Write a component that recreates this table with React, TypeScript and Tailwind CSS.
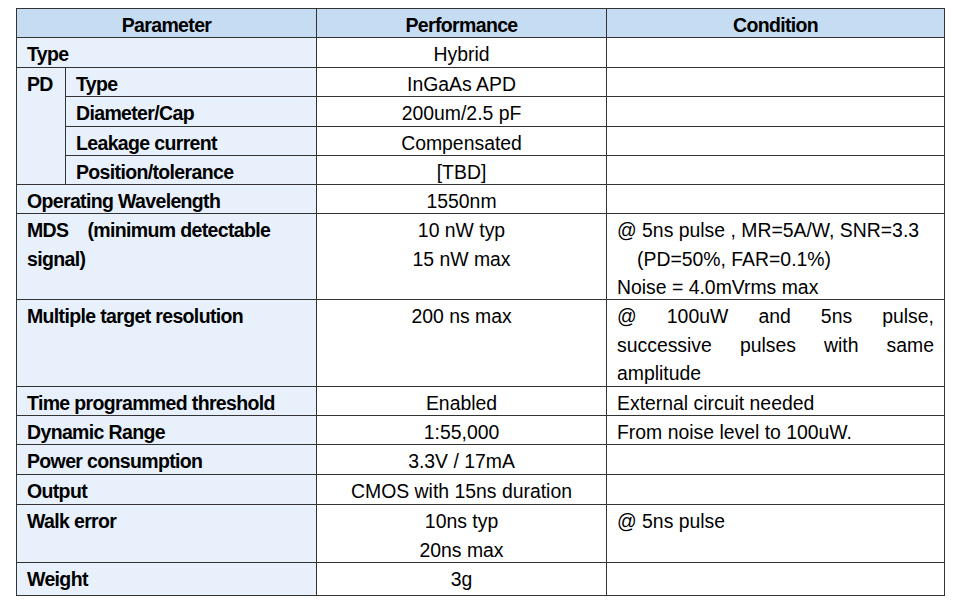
import React from "react";

const B = "border border-[#333333] pt-[2px] pb-0 align-top";
const P = `${B} bg-[#e8f1fb] px-[10px] font-bold text-[19.5px] tracking-[-0.65px]`;
const H = `${B} bg-[#c6dcf2] px-[10px] text-center font-bold text-[19.5px] tracking-[-0.65px]`;
const V = `${B} bg-white px-[10px] text-center text-[19.4px]`;
const C = `${B} bg-white px-[10px] text-left text-[19.4px]`;

function X({ children }: { children?: React.ReactNode }) {
  return <div className="leading-[28.6px] -mb-[6px]">{children}</div>;
}

function J({ words }: { words: string[] }) {
  return (
    <div className="flex justify-between">
      {words.map((w, i) => (
        <span key={i}>{w}</span>
      ))}
    </div>
  );
}

export default function App() {
  return (
    <div className="w-[960px] h-[606px] bg-white pt-[8px] pl-[16px]" style={{ fontFamily: '"Liberation Sans", Arial, sans-serif' }}>
      <table className="table-fixed border-collapse w-[928px] text-black">
        <colgroup>
          <col className="w-[49px]" />
          <col className="w-[251px]" />
          <col className="w-[290px]" />
          <col className="w-[338px]" />
        </colgroup>
        <tbody>
          <tr className="h-[29px]">
            <td colSpan={2} className={H}><X>Parameter</X></td>
            <td className={H}><X>Performance</X></td>
            <td className={H}><X>Condition</X></td>
          </tr>
          <tr className="h-[30px]">
            <td colSpan={2} className={P}><X>Type</X></td>
            <td className={V}><X>Hybrid</X></td>
            <td className={C}><X /></td>
          </tr>
          <tr className="h-[29px]">
            <td rowSpan={4} className={P}><X>PD</X></td>
            <td className={P}><X>Type</X></td>
            <td className={V}><X>InGaAs APD</X></td>
            <td className={C}><X /></td>
          </tr>
          <tr className="h-[30px]">
            <td className={P}><X>Diameter/Cap</X></td>
            <td className={V}><X>200um/2.5 pF</X></td>
            <td className={C}><X /></td>
          </tr>
          <tr className="h-[29px]">
            <td className={P}><X>Leakage current</X></td>
            <td className={V}><X>Compensated</X></td>
            <td className={C}><X /></td>
          </tr>
          <tr className="h-[29px]">
            <td className={P}><X>Position/tolerance</X></td>
            <td className={V}><X>[TBD]</X></td>
            <td className={C}><X /></td>
          </tr>
          <tr className="h-[29px]">
            <td colSpan={2} className={P}><X>Operating Wavelength</X></td>
            <td className={V}><X>1550nm</X></td>
            <td className={C}><X /></td>
          </tr>
          <tr className="h-[86px]">
            <td colSpan={2} className={P}>
              <X>
                <div className="whitespace-pre">{"MDS    (minimum detectable"}</div>
                <div>signal)</div>
              </X>
            </td>
            <td className={V}>
              <X>
                <div>10 nW typ</div>
                <div>15 nW max</div>
              </X>
            </td>
            <td className={C}>
              <X>
                <div className="whitespace-nowrap">@ 5ns pulse , MR=5A/W, SNR=3.3</div>
                <div className="pl-[20px]">(PD=50%, FAR=0.1%)</div>
                <div>Noise = 4.0mVrms max</div>
              </X>
            </td>
          </tr>
          <tr className="h-[87px]">
            <td colSpan={2} className={P}><X>Multiple target resolution</X></td>
            <td className={V}><X>200 ns max</X></td>
            <td className={C}>
              <X>
                <J words={["@", "100uW", "and", "5ns", "pulse,"]} />
                <J words={["successive", "pulses", "with", "same"]} />
                <div>amplitude</div>
              </X>
            </td>
          </tr>
          <tr className="h-[29px]">
            <td colSpan={2} className={P}><X>Time programmed threshold</X></td>
            <td className={V}><X>Enabled</X></td>
            <td className={C}><X>External circuit needed</X></td>
          </tr>
          <tr className="h-[29px]">
            <td colSpan={2} className={P}><X>Dynamic Range</X></td>
            <td className={V}><X>1:55,000</X></td>
            <td className={C}><X>From noise level to 100uW.</X></td>
          </tr>
          <tr className="h-[30px]">
            <td colSpan={2} className={P}><X>Power consumption</X></td>
            <td className={V}><X>3.3V / 17mA</X></td>
            <td className={C}><X /></td>
          </tr>
          <tr className="h-[30px]">
            <td colSpan={2} className={P}><X>Output</X></td>
            <td className={V}><X>CMOS with 15ns duration</X></td>
            <td className={C}><X /></td>
          </tr>
          <tr className="h-[58px]">
            <td colSpan={2} className={P}><X>Walk error</X></td>
            <td className={V}>
              <X>
                <div>10ns typ</div>
                <div>20ns max</div>
              </X>
            </td>
            <td className={C}><X>@ 5ns pulse</X></td>
          </tr>
          <tr className="h-[33px]">
            <td colSpan={2} className={P}><X>Weight</X></td>
            <td className={V}><X>3g</X></td>
            <td className={C}><X /></td>
          </tr>
        </tbody>
      </table>
    </div>
  );
}
